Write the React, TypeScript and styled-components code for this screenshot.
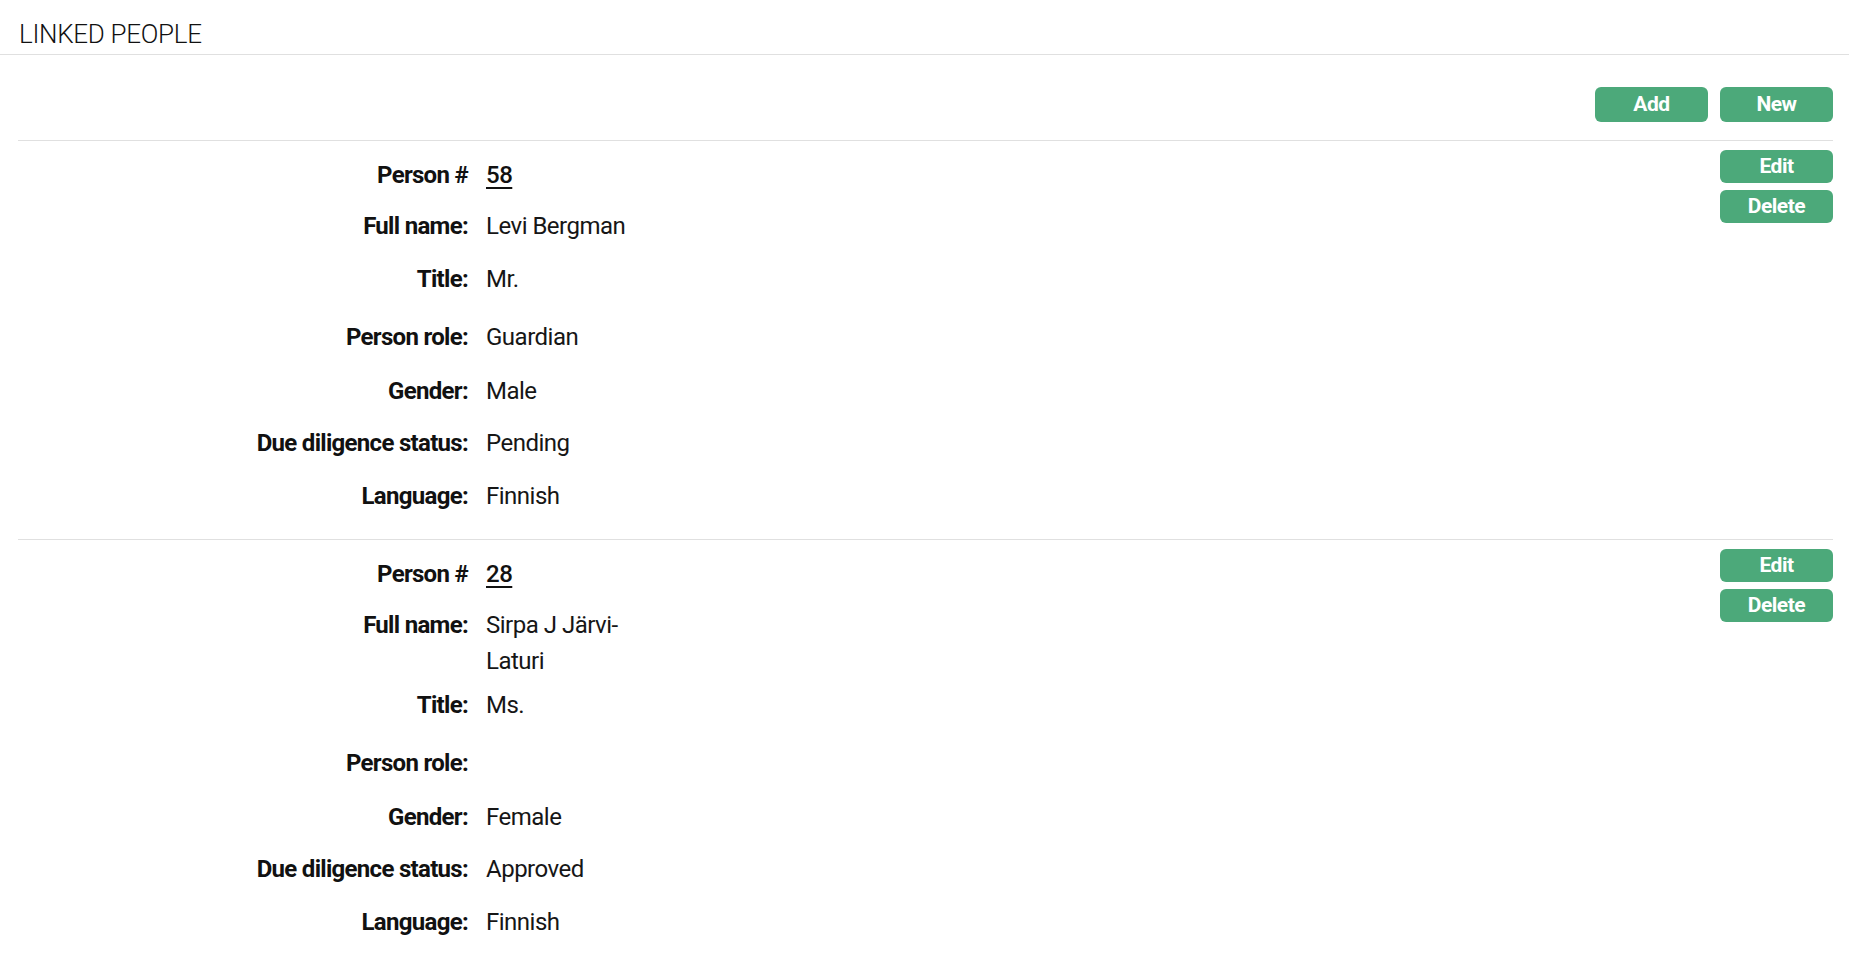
import React from "react";
import styled, { createGlobalStyle } from "styled-components";

const GlobalStyle = createGlobalStyle`
  html, body {
    margin: 0;
    padding: 0;
    background: #ffffff;
  }
  body {
    font-family: Roboto, "Noto Sans", "Liberation Sans", sans-serif;
    color: #161616;
  }
  * { box-sizing: border-box; }
`;

const Page = styled.div`
  width: 100%;
`;

const Header = styled.header`
  height: 55px;
  padding: 0 18px;
  display: flex;
  align-items: flex-end;
  border-bottom: 1px solid #e0e0e0;
`;

const HeaderTitle = styled.h1`
  margin: 0 0 5px 1px;
  font-size: 26px;
  line-height: 30px;
  font-weight: 300;
  letter-spacing: -0.3px;
  color: #111;
`;

const Content = styled.div`
  padding: 0 16px 0 18px;
`;

const Toolbar = styled.div`
  display: flex;
  justify-content: flex-end;
  gap: 12px;
  padding: 32px 0 18px;
  border-bottom: 1px solid #e0e0e0;
`;

const Button = styled.button<{ $h?: number }>`
  width: 113px;
  height: ${(p) => p.$h ?? 35}px;
  border: none;
  border-radius: 6px;
  background: #4ca97a;
  color: #ffffff;
  font-family: Roboto, "Noto Sans", sans-serif;
  font-weight: 700;
  font-size: 21px;
  letter-spacing: -0.5px;
  line-height: 1;
  padding: 0;
  cursor: pointer;
  display: flex;
  align-items: center;
  justify-content: center;
`;

const PersonSection = styled.section`
  display: flex;
  justify-content: space-between;
  border-bottom: 1px solid #e0e0e0;
`;

const Fields = styled.div`
  padding: 16px 0 8px;
`;

const Row = styled.div<{ $h: number }>`
  display: flex;
  align-items: flex-start;
  min-height: ${(p) => p.$h}px;
  margin-bottom: 8px;
`;

const Label = styled.div`
  width: 450px;
  text-align: right;
  font-size: 24px;
  line-height: 36px;
  font-weight: 700;
  letter-spacing: -0.7px;
  color: #111;
`;

const Value = styled.div`
  width: 145px;
  margin-left: 18px;
  font-size: 24px;
  line-height: 36px;
  font-weight: 400;
  letter-spacing: -0.5px;
  color: #161616;
`;

const PersonLink = styled.a`
  color: #111;
  font-weight: 500;
  text-decoration: underline;
  text-decoration-thickness: 2px;
  text-underline-offset: 4px;
`;

const Actions = styled.div`
  display: flex;
  flex-direction: column;
  gap: 7px;
  padding-top: 9px;
`;

type Person = {
  id: number;
  fullName: string;
  title: string;
  role: string;
  gender: string;
  dueDiligence: string;
  language: string;
};

const people: Person[] = [
  {
    id: 58,
    fullName: "Levi Bergman",
    title: "Mr.",
    role: "Guardian",
    gender: "Male",
    dueDiligence: "Pending",
    language: "Finnish",
  },
  {
    id: 28,
    fullName: "Sirpa J Järvi-Laturi",
    title: "Ms.",
    role: "",
    gender: "Female",
    dueDiligence: "Approved",
    language: "Finnish",
  },
];

const PersonCard: React.FC<{ person: Person }> = ({ person }) => {
  const rows: { label: string; value: React.ReactNode; h: number }[] = [
    {
      label: "Person #",
      value: <PersonLink href="#">{person.id}</PersonLink>,
      h: 43,
    },
    { label: "Full name:", value: person.fullName, h: 45 },
    { label: "Title:", value: person.title, h: 50 },
    { label: "Person role:", value: person.role, h: 46 },
    { label: "Gender:", value: person.gender, h: 44 },
    { label: "Due diligence status:", value: person.dueDiligence, h: 45 },
    { label: "Language:", value: person.language, h: 45 },
  ];
  return (
    <PersonSection>
      <Fields>
        {rows.map((r) => (
          <Row key={r.label} $h={r.h}>
            <Label>{r.label}</Label>
            <Value>{r.value}</Value>
          </Row>
        ))}
      </Fields>
      <Actions>
        <Button $h={33}>Edit</Button>
        <Button $h={33}>Delete</Button>
      </Actions>
    </PersonSection>
  );
};

export default function App() {
  return (
    <Page>
      <GlobalStyle />
      <Header>
        <HeaderTitle>LINKED PEOPLE</HeaderTitle>
      </Header>
      <Content>
        <Toolbar>
          <Button>Add</Button>
          <Button>New</Button>
        </Toolbar>
        {people.map((p) => (
          <PersonCard key={p.id} person={p} />
        ))}
      </Content>
    </Page>
  );
}
